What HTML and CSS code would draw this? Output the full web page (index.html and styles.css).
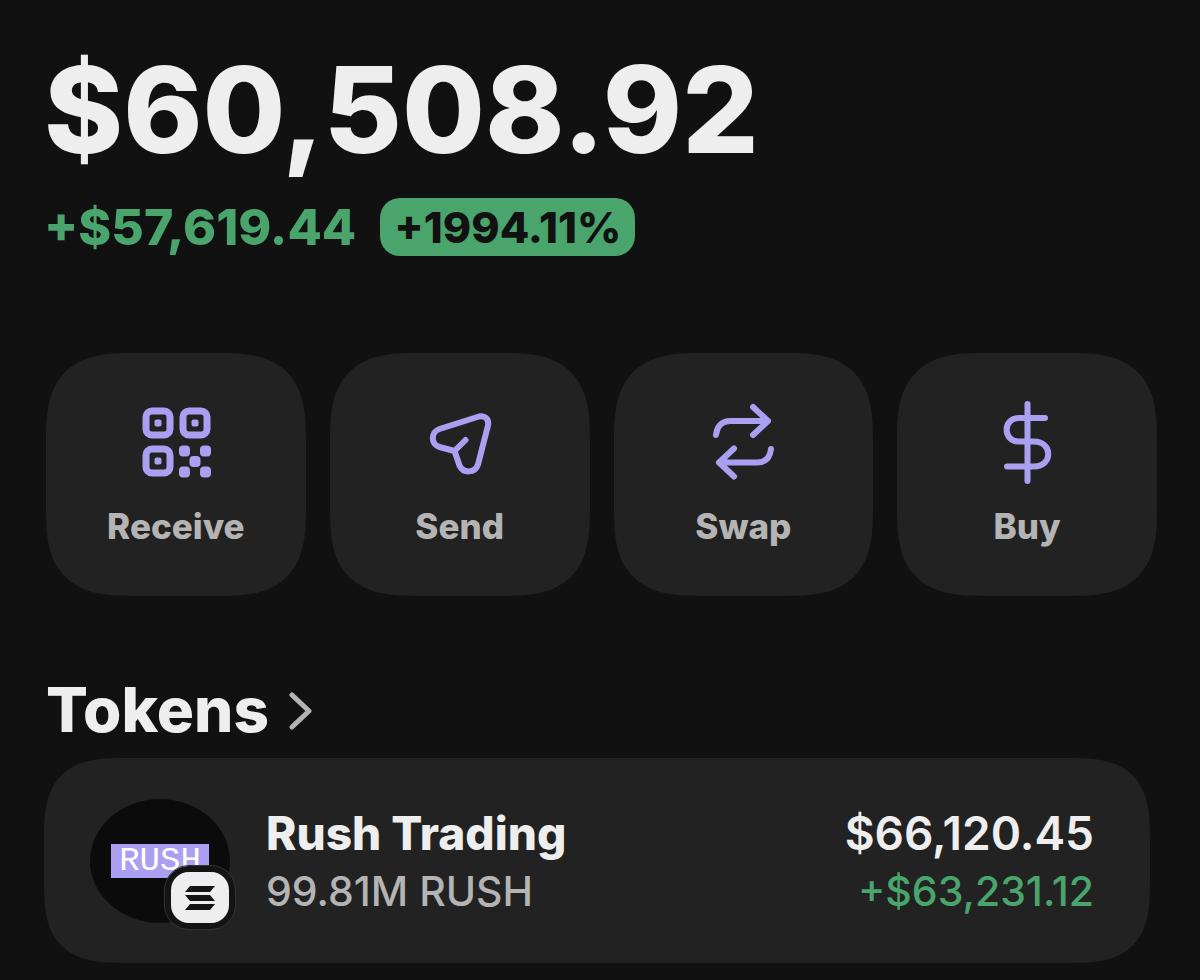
FILE: index.html
```html
<!DOCTYPE html>
<html lang="en">
<head>
    <meta charset="UTF-8">
    <meta name="viewport" content="width=device-width, initial-scale=1.0">
    <title>Wallet</title>
    <link rel="stylesheet" href="styles.css">
</head>
<body>
    <main class="wallet">
        <section class="balance">
            <h1 class="balance-total">$60,508.92</h1>
            <div class="balance-change">
                <span class="change-amount">+$57,619.44</span>
                <span class="change-percent">+1994.11%</span>
            </div>
        </section>

        <nav class="actions">
            <button class="action" type="button">
                <svg class="icon" viewBox="0 0 90 90" fill="none" stroke="currentColor" stroke-width="7" aria-hidden="true">
                    <rect x="15" y="13" width="24" height="24" rx="6"/>
                    <rect x="52" y="13" width="24" height="24" rx="6"/>
                    <rect x="15" y="51" width="24" height="24" rx="6"/>
                    <g fill="currentColor" stroke="none">
                        <rect x="23.500" y="21.500" width="7" height="7" rx="2"/>
                        <rect x="60.500" y="21.500" width="7" height="7" rx="2"/>
                        <rect x="23.500" y="59.500" width="7" height="7" rx="2"/>
                        <rect x="48" y="47.500" width="11" height="11" rx="4"/>
                        <rect x="69" y="47.500" width="11" height="11" rx="4"/>
                        <rect x="58.500" y="58" width="11" height="11" rx="4"/>
                        <rect x="48" y="68.500" width="11" height="11" rx="4"/>
                        <rect x="69" y="68.500" width="11" height="11" rx="4"/>
                    </g>
                </svg>
                <span>Receive</span>
            </button>
            <button class="action" type="button">
                <svg class="icon" viewBox="0 0 90 90" fill="none" stroke="currentColor" stroke-width="6" stroke-linecap="round" stroke-linejoin="round" aria-hidden="true">
                    <path d="M50.500 42 L39.500 53 L24.500 49 C15.500 46.500 15.500 34 24.500 31 L64 18.500 C69.500 17 74.500 21 73 27.500 L63 66.500 C60 75.500 48 75.500 44.500 67.500 Q42 60 39.500 53"/>
                </svg>
                <span>Send</span>
            </button>
            <button class="action" type="button">
                <svg class="icon" viewBox="0 0 90 90" fill="none" stroke="currentColor" stroke-width="6" stroke-linecap="round" stroke-linejoin="round" aria-hidden="true">
                    <path d="M18 37 C19 28 24 23 32 23 H70 M55 9 L70 23 L55 37"/>
                    <path d="M73 51 C72 60 67 64.500 59 64.500 H21 M36 50.500 L21 64.500 L36 78.500"/>
                </svg>
                <span>Swap</span>
            </button>
            <button class="action" type="button">
                <svg class="icon" viewBox="0 0 90 90" fill="none" stroke="currentColor" stroke-width="6" stroke-linecap="round" aria-hidden="true">
                    <path d="M45.500 6 V83"/>
                    <path d="M63 20 H37 C20.500 20 20.500 43.500 37 43.500 H52 C71 43.500 71 68.500 52 68.500 H25"/>
                </svg>
                <span>Buy</span>
            </button>
        </nav>

        <section class="tokens">
            <h2 class="tokens-title">
                <a href="#tokens">
                    Tokens
                    <svg class="chevron" viewBox="0 0 24 40" fill="none" stroke="currentColor" stroke-width="5" stroke-linecap="round" stroke-linejoin="round" aria-hidden="true">
                        <path d="M3 5 L20 21 L3 37"/>
                    </svg>
                </a>
            </h2>

            <a class="token" id="tokens" href="#rush">
                <div class="token-logo">
                    <span class="token-mark">RUSH</span>
                    <span class="chain">
                        <svg viewBox="0 0 32 26" fill="currentColor" aria-hidden="true">
                            <path d="M6 1 H31 L26 7 H1 Z"/>
                            <path d="M1 10 H26 L31 16 H6 Z"/>
                            <path d="M6 19 H31 L26 25 H1 Z"/>
                        </svg>
                    </span>
                </div>
                <div class="token-info">
                    <div class="token-name">Rush Trading</div>
                    <div class="token-amount">99.81M RUSH</div>
                </div>
                <div class="token-value">
                    <div class="token-price">$66,120.45</div>
                    <div class="token-gain">+$63,231.12</div>
                </div>
            </a>
        </section>
    </main>
</body>
</html>
```
FILE: styles.css
```css
* {
    box-sizing: border-box;
}
body {
    margin: 0;
    background: #111111;
    color: #eeeeee;
    font-family: Inter, "Liberation Sans", sans-serif;
}
a {
    color: inherit;
    text-decoration: none;
}
h1, h2 {
    margin: 0;
}
.wallet {
    padding: 40px 43px 16px 44px;
}

/* balance */
.balance-total {
    font-size: 120px;
    line-height: 140px;
    font-weight: 800;
}
.balance-change {
    display: flex;
    align-items: center;
    gap: 24px;
    margin-top: 18px;
    font-weight: 800;
}
.change-amount {
    color: #4aa56c;
    font-size: 50px;
    line-height: 58px;
}
.change-percent {
    padding: 0 14px;
    border-radius: 20px;
    background: #4aa56c;
    color: #111111;
    font-size: 43px;
    line-height: 58px;
}

/* action buttons */
.actions {
    display: grid;
    grid-template-columns: repeat(4, 1fr);
    gap: 24px;
    margin-top: 97px;
    padding-left: 2px;
}
.action {
    display: flex;
    flex-direction: column;
    align-items: center;
    gap: 16px;
    padding: 45px 0 48px;
    border: none;
    border-radius: 68px;
    background: #222222;
    color: #b4b4b4;
    font-family: inherit;
    font-size: 35px;
    line-height: 44px;
    font-weight: 800;
    cursor: pointer;
}
.icon {
    width: 90px;
    height: 90px;
    color: #ab9ff2;
}

/* tokens */
.tokens {
    margin-top: 80px;
}
.tokens-title {
    padding-left: 2px;
    font-size: 62px;
    line-height: 68px;
    font-weight: 800;
}
.tokens-title a {
    display: inline-flex;
    align-items: center;
    gap: 20px;
}
.chevron {
    width: 24px;
    height: 40px;
    color: #b4b4b4;
}
.token {
    display: flex;
    align-items: center;
    gap: 36px;
    margin: 14px 7px 0 0;
    padding: 41px 56px 40px 46px;
    border-radius: 60px;
    background: #222222;
}
.token-logo {
    position: relative;
    display: flex;
    align-items: center;
    justify-content: center;
    width: 140px;
    height: 124px;
    border-radius: 50%;
    background: #0b0b0b;
}
.token-mark {
    padding: 0 8px;
    background: #ab9ff2;
    color: #ffffff;
    font-family: "Liberation Mono", monospace;
    font-size: 34px;
    line-height: 34px;
}
/* network badge over the token logo */
.chain {
    position: absolute;
    right: -5px;
    bottom: -6px;
    display: flex;
    align-items: center;
    justify-content: center;
    width: 70px;
    height: 63px;
    border: 6px solid #141414;
    border-radius: 24px;
    outline: 1px solid #333333;
    background: #eeeeee;
    color: #141414;
}
.chain svg {
    width: 32px;
    height: 26px;
}
.token-info {
    flex: 1;
}
.token-name,
.token-price {
    font-size: 46px;
    line-height: 60px;
}
.token-name {
    font-weight: 800;
}
.token-price {
    font-weight: 600;
}
.token-amount,
.token-gain {
    font-size: 41px;
    line-height: 56px;
    font-weight: 500;
}
.token-amount {
    color: #b4b4b4;
}
.token-value {
    text-align: right;
}
.token-gain {
    color: #4aa56c;
}

/* smoother corners where the browser knows them */
@supports (corner-shape: squircle) {
    .action {
        border-radius: 88px;
        corner-shape: superellipse(1.5);
    }
    .token {
        border-radius: 80px;
        corner-shape: superellipse(1.5);
    }
}
```
